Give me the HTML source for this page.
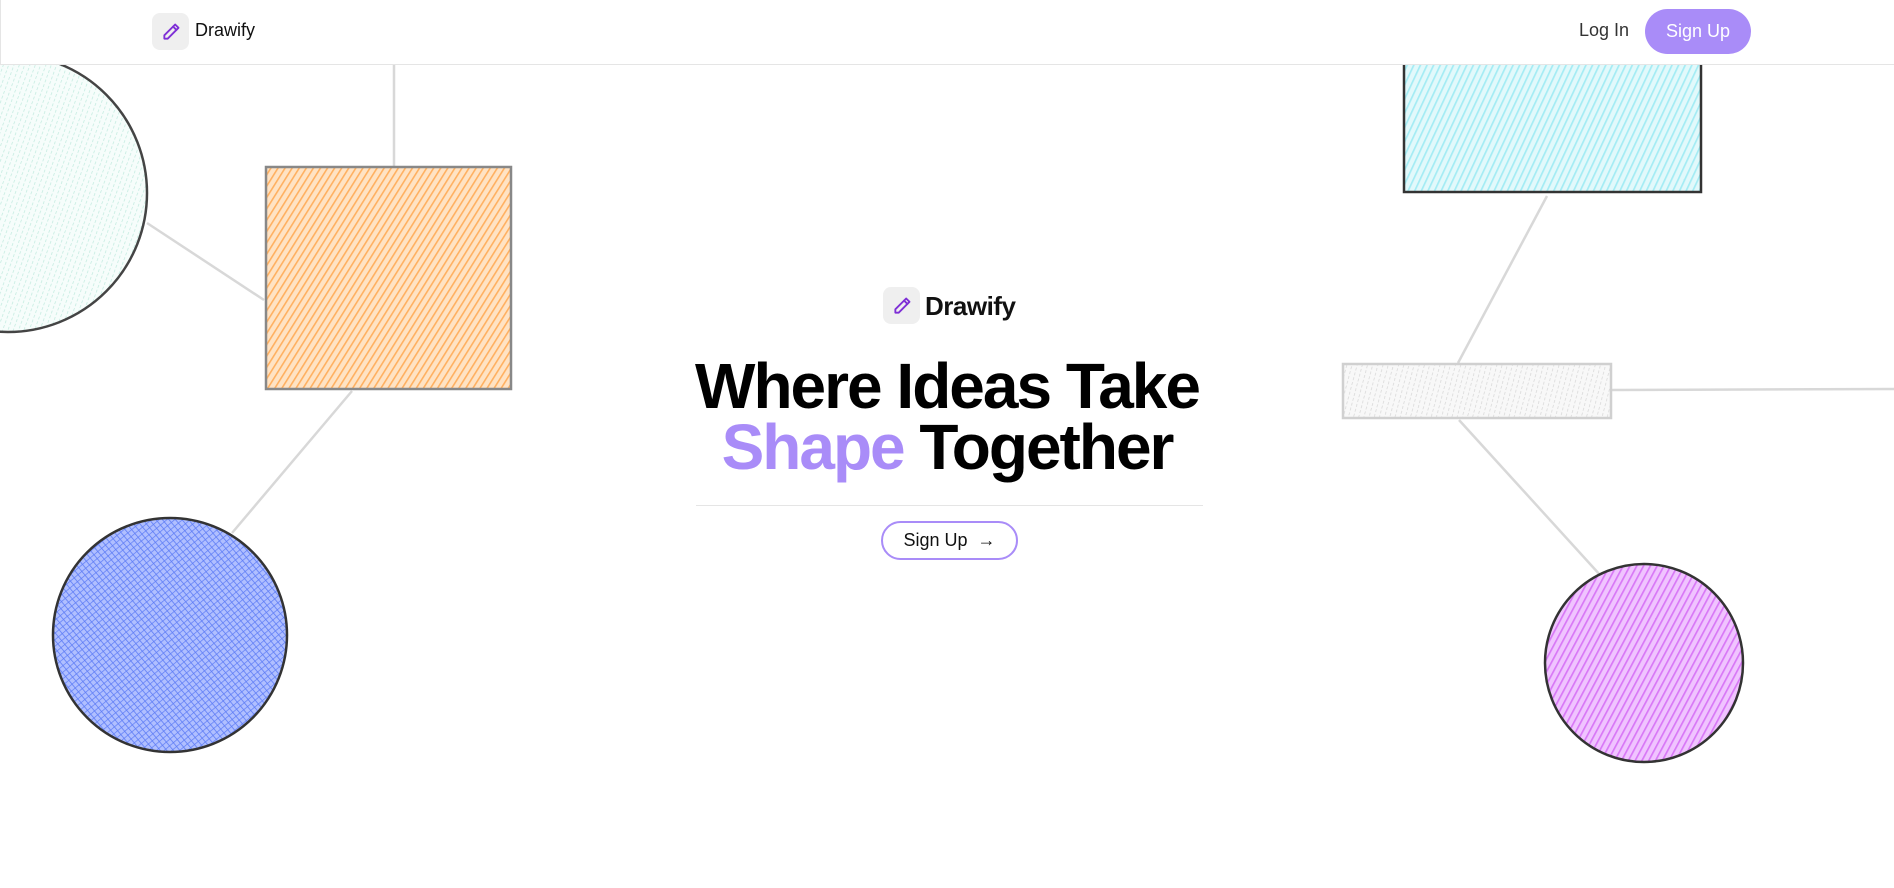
<!DOCTYPE html>
<html><head><meta charset="utf-8"><style>
*{margin:0;padding:0;box-sizing:border-box}
body{width:1894px;height:888px;overflow:hidden;background:#fff;font-family:"Liberation Sans",sans-serif;position:relative}
svg.bg{position:absolute;left:0;top:0}
nav{position:absolute;left:0;top:0;width:1894px;height:65px;border-bottom:1px solid #e5e5e5;border-left:1px solid #e5e5e5;background:#fff}
.lb{position:absolute;width:37px;height:37px;border-radius:8px;background:#efefef;display:flex;align-items:center;justify-content:center}
</style></head><body>
<svg class="bg" width="1894" height="888">
<defs>
<pattern id="po" width="6" height="6" patternUnits="userSpaceOnUse" patternTransform="rotate(32)"><rect width="6" height="6" fill="#ffe3c4"/><line x1="0" y1="0" x2="0" y2="6" stroke="#ffb060" stroke-width="3.2"/></pattern>
<pattern id="pc" width="6" height="6" patternUnits="userSpaceOnUse" patternTransform="rotate(25)"><rect width="6" height="6" fill="#e2f9fb"/><line x1="0" y1="0" x2="0" y2="6" stroke="#a4ecf4" stroke-width="3.4"/></pattern>
<pattern id="pb" width="5" height="5" patternUnits="userSpaceOnUse" patternTransform="rotate(-40)"><rect width="5" height="5" fill="#b0bfff"/><line x1="0" y1="0" x2="0" y2="5" stroke="#5d7cf5" stroke-width="1.6"/><line x1="0" y1="0" x2="5" y2="0" stroke="#5d7cf5" stroke-width="1.4"/></pattern>
<pattern id="pp" width="6" height="6" patternUnits="userSpaceOnUse" patternTransform="rotate(28)"><rect width="6" height="6" fill="#f0c4ff"/><line x1="0" y1="0" x2="0" y2="6" stroke="#d878f6" stroke-width="3.4"/></pattern>
<pattern id="pt" width="5" height="5" patternUnits="userSpaceOnUse" patternTransform="rotate(20)"><rect width="5" height="5" fill="#f6fdfb"/><line x1="0" y1="0" x2="0" y2="5" stroke="#bfeade" stroke-width="1.4" stroke-dasharray="2 2"/></pattern>
<pattern id="pg" width="5" height="5" patternUnits="userSpaceOnUse" patternTransform="rotate(15)"><rect width="5" height="5" fill="#f8f8f8"/><line x1="0" y1="0" x2="0" y2="5" stroke="#d6d6d6" stroke-width="1.4" stroke-dasharray="2 2"/></pattern>
</defs>
<g stroke="#d8d8d8" stroke-width="2.5" fill="none">
<line x1="394" y1="64" x2="394" y2="166"/>
<line x1="147" y1="223" x2="264" y2="300"/>
<line x1="352" y1="391" x2="232" y2="533"/>
<line x1="1547" y1="196" x2="1458" y2="363"/>
<line x1="1611" y1="390" x2="1894" y2="389"/>
<line x1="1459" y1="420" x2="1601" y2="576"/>
</g>
<circle cx="8" cy="193" r="139" fill="url(#pt)" stroke="#444" stroke-width="2.5"/>
<rect x="266" y="167" width="245" height="222" fill="url(#po)" stroke="#888" stroke-width="2.5"/>
<circle cx="170" cy="635" r="117" fill="url(#pb)" stroke="#333" stroke-width="2.5"/>
<rect x="1404" y="40" width="297" height="152" fill="url(#pc)" stroke="#333" stroke-width="2.5"/>
<rect x="1343" y="364" width="268" height="54" fill="url(#pg)" stroke="#d0d0d0" stroke-width="2.5"/>
<circle cx="1644" cy="663" r="99" fill="url(#pp)" stroke="#333" stroke-width="2.5"/>
</svg>
<nav>
<div class="lb" style="left:151px;top:13px"><svg width="20" height="20" viewBox="0 0 24 24" fill="none" stroke="#7e2fd6" stroke-width="2.2" stroke-linecap="round" stroke-linejoin="round"><path d="M17 3l4 4L8 20H4v-4z"/><path d="M14.5 5.5l4 4"/></svg></div>
<div style="position:absolute;left:194px;top:20px;font-size:18px;color:#111">Drawify</div>
<div style="position:absolute;left:1578px;top:20px;font-size:18px;color:#333">Log In</div>
<div style="position:absolute;left:1644px;top:9px;width:106px;height:45px;border-radius:23px;background:#a98cf8;color:#fff;font-size:18px;display:flex;align-items:center;justify-content:center">Sign Up</div>
</nav>
<div class="lb" style="left:883px;top:287px"><svg width="20" height="20" viewBox="0 0 24 24" fill="none" stroke="#7e2fd6" stroke-width="2.2" stroke-linecap="round" stroke-linejoin="round"><path d="M17 3l4 4L8 20H4v-4z"/><path d="M14.5 5.5l4 4"/></svg></div>
<div style="position:absolute;left:925px;top:291px;font-size:26px;font-weight:bold;color:#111;letter-spacing:-0.5px">Drawify</div>
<div style="position:absolute;left:647px;width:600px;top:356px;text-align:center;font-size:64px;font-weight:bold;letter-spacing:-2px;line-height:61px;color:#000">Where Ideas Take<br><span style="color:#a98cf8">Shape</span> Together</div>
<div style="position:absolute;left:696px;top:505px;width:507px;height:1px;background:#e5e5e5"></div>
<div style="position:absolute;left:881px;top:521px;width:137px;height:39px;border:2px solid #a98cf8;border-radius:20px;font-size:18px;color:#111;display:flex;align-items:center;justify-content:center">Sign Up&nbsp;&nbsp;→</div>
</body></html>
